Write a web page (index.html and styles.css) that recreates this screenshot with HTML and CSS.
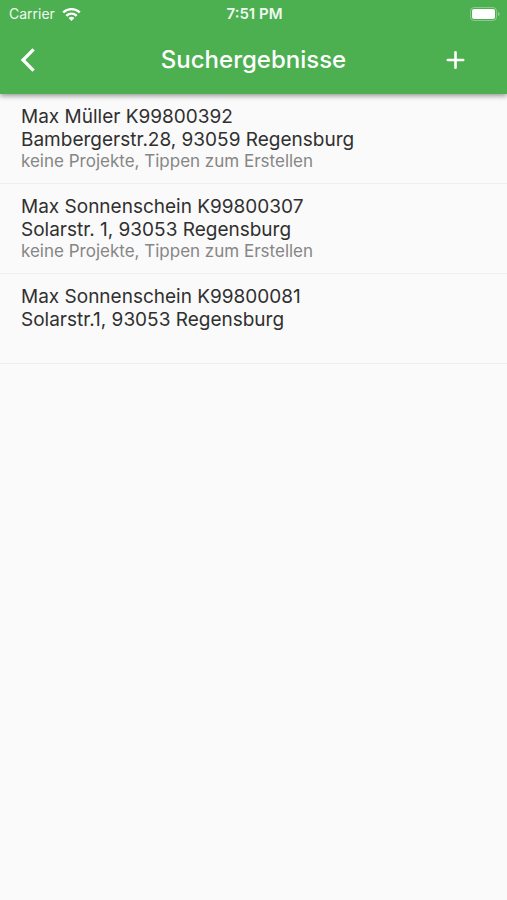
FILE: index.html
```html
<!DOCTYPE html>
<html lang="de">
<head>
<meta charset="utf-8">
<meta name="viewport" content="width=device-width, initial-scale=1">
<title>Suchergebnisse</title>
<link rel="stylesheet" href="styles.css">
</head>
<body>
<header class="header">
  <div class="status">
    <div class="carrier">
      <span>Carrier</span>
      <svg class="wifi" viewBox="0 0 19 14" aria-hidden="true">
        <path d="M9.5 14 6.6 11.1a4.1 4.1 0 0 1 5.8 0Z" fill="currentColor"/>
        <path d="M4.3 8.8a7.4 7.4 0 0 1 10.4 0M1.2 5.5a11.8 11.8 0 0 1 16.6 0" fill="none" stroke="currentColor" stroke-width="2.4"/>
      </svg>
    </div>
    <time class="clock">7:51 PM</time>
    <svg class="battery" viewBox="0 0 30 14" aria-hidden="true">
      <rect x="0.5" y="0.5" width="26" height="13" rx="3.5" fill="none" stroke="currentColor" opacity=".35"/>
      <rect x="2" y="2" width="23" height="10" rx="2" fill="currentColor"/>
      <path d="M28 5q1.6.6 1.6 2T28 9Z" fill="currentColor" opacity=".4"/>
    </svg>
  </div>
  <div class="toolbar">
    <button class="action" type="button" aria-label="Zurück">
      <svg viewBox="0 0 32 32" aria-hidden="true"><path d="M21.6 5.4 11 16l10.6 10.6" fill="none" stroke="currentColor" stroke-width="3.2"/></svg>
    </button>
    <h1 class="title">Suchergebnisse</h1>
    <button class="action" type="button" aria-label="Hinzufügen">
      <svg viewBox="0 0 32 32" aria-hidden="true"><path d="M15.5 8.3v15.4M7.8 16h15.4" fill="none" stroke="currentColor" stroke-width="2.6" stroke-linecap="round"/></svg>
    </button>
  </div>
</header>
<main>
  <ul class="results">
    <li><a class="result" href="#"><span class="line">Max Müller K99800392</span><span class="line">Bambergerstr.28, 93059 Regensburg</span><span class="note">keine Projekte, Tippen zum Erstellen</span></a></li>
    <li><a class="result" href="#"><span class="line">Max Sonnenschein K99800307</span><span class="line">Solarstr. 1, 93053 Regensburg</span><span class="note">keine Projekte, Tippen zum Erstellen</span></a></li>
    <li><a class="result" href="#"><span class="line">Max Sonnenschein K99800081</span><span class="line">Solarstr.1, 93053 Regensburg</span></a></li>
  </ul>
</main>
</body>
</html>
```
FILE: styles.css
```css
* { box-sizing: border-box; }
body { margin: 0; min-height: 100vh; background: #fafafa; color: #303030; font-family: Inter, sans-serif; }
.header { position: relative; padding-bottom: 2px; background: #4caf50; color: #fff; box-shadow: 0 2px 5px rgba(0, 0, 0, .4); }
.status { display: grid; grid-template-columns: 1fr auto 1fr; align-items: center; height: 27px; padding: 0 7px 0 9px; font-size: 14px; }
.carrier { display: flex; align-items: center; gap: 7px; color: #f0f9f0; }
.wifi { width: 19px; height: 14px; color: #fff; }
.clock { font-size: 15px; font-weight: 600; color: #f0f9f0; }
.battery { width: 30px; height: 14px; justify-self: end; }
.toolbar { display: grid; grid-template-columns: 56px 1fr 56px; align-items: center; height: 65px; padding-right: 23px; }
.action { display: grid; place-items: center; height: 56px; padding: 0; border: 0; background: none; color: inherit; }
.action svg { width: 32px; height: 32px; }
.title { margin: 0; padding-left: 23px; text-align: center; font-size: 24px; font-weight: 500; }
.results { margin: 0; padding: 0; list-style: none; }
.result { display: flex; flex-direction: column; min-height: 90px; padding: 11px 21px; border-bottom: 1px solid #efefef; color: inherit; text-decoration: none; }
.line { font-size: 19px; line-height: 23px; }
.note { font-size: 17px; line-height: 21px; color: #868686; }
```
